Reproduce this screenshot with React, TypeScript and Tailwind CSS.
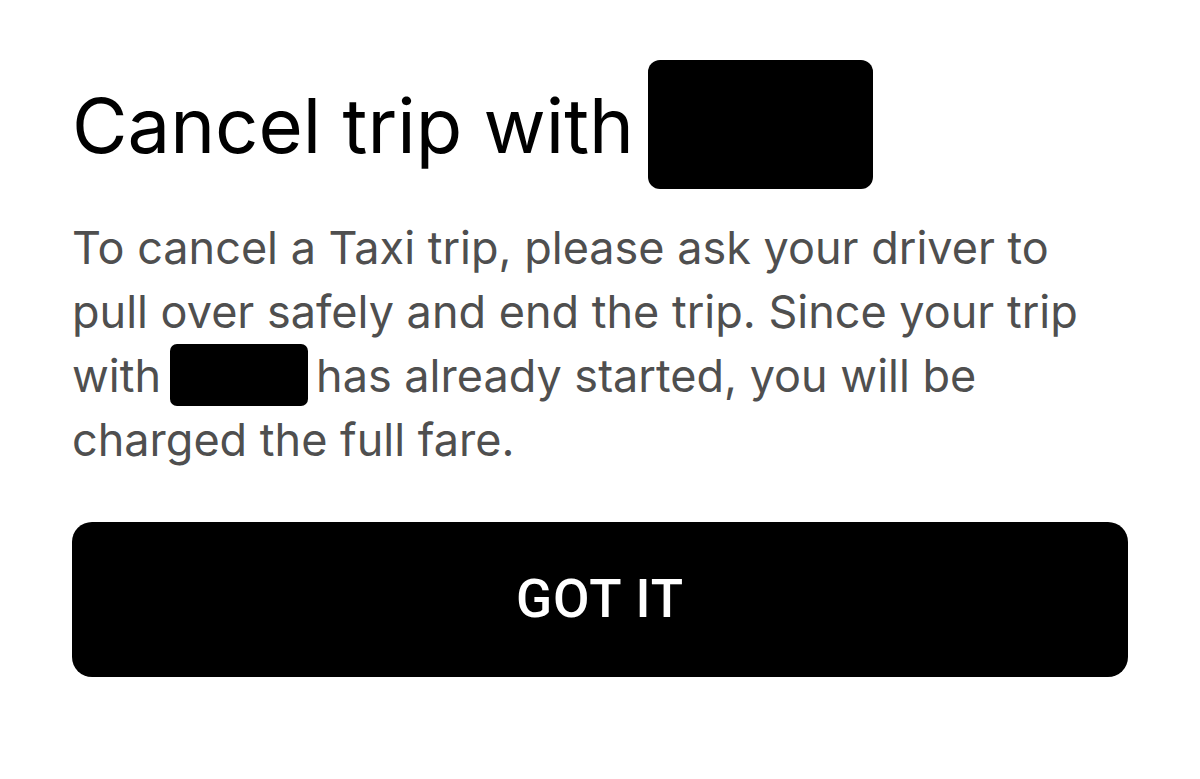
export default function App() {
  return (
    <div className="min-h-[779px] w-[1200px] bg-white font-['Inter','Noto_Sans',sans-serif]">
      <div className="px-[72px] pt-[60px]">
        {/* title with redacted driver name */}
        <h2 className="flex items-center h-[129px] text-[76px] font-normal leading-none text-black">
          <span>Cancel trip with</span>
          <span className="ml-[14px] inline-block h-[129px] w-[225px] rounded-[12px] bg-black" />
        </h2>

        <p className="mt-[27px] text-[45px] leading-[64px] text-[#4f4f4f] whitespace-nowrap">
          To cancel a Taxi trip, please ask your driver to
          <br />
          pull over safely and end the trip. Since your trip
          <br />
          with
          <span className="ml-[9px] mr-[8px] inline-block h-[62px] w-[138px] rounded-[7px] bg-black align-[-14px]" />
          has already started, you will be
          <br />
          charged the full fare.
        </p>

        <button className="mt-[50px] flex h-[155px] w-[1056px] items-center justify-center rounded-[20px] bg-black font-['Roboto',Arial,sans-serif] text-[53px] font-medium tracking-[1px] text-white">
          GOT IT
        </button>
      </div>
    </div>
  )
}
